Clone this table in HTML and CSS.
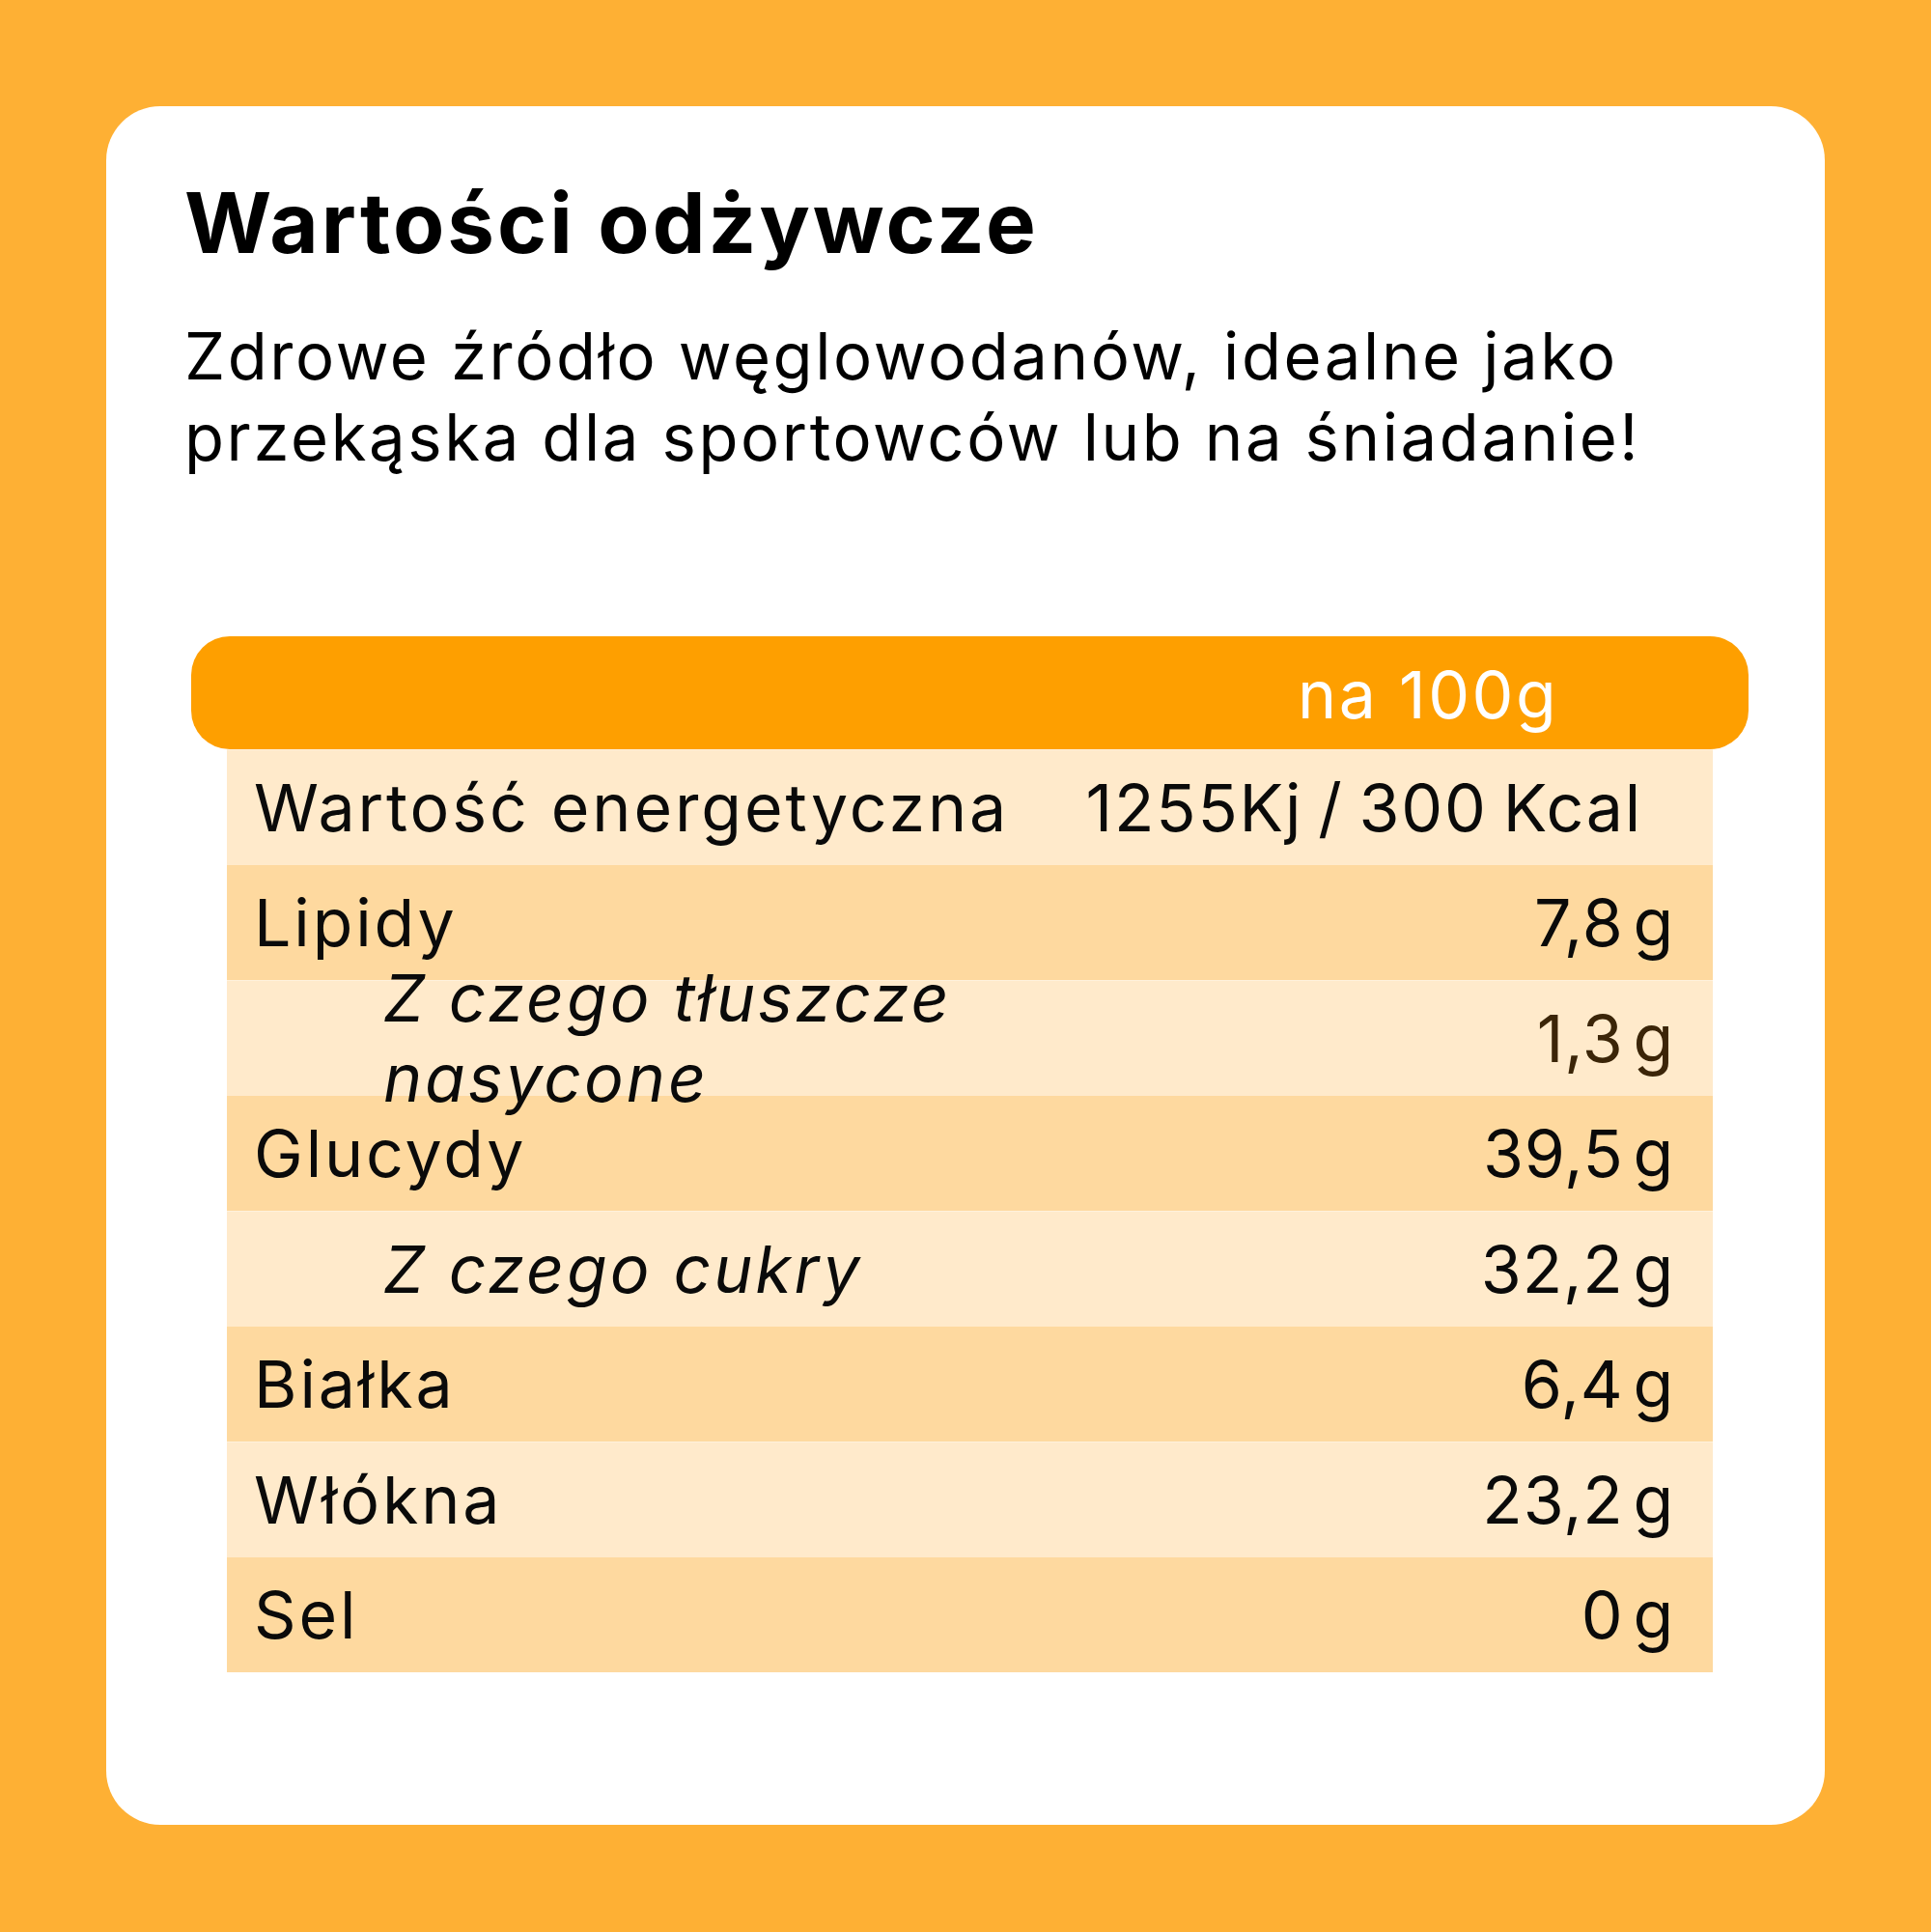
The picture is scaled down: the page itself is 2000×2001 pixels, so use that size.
FILE: index.html
```html
<!DOCTYPE html>
<html lang="pl">
<head>
<meta charset="utf-8">
<title>Wartości odżywcze</title>
<link rel="stylesheet" href="styles.css">
</head>
<body>
<div class="page">
  <div class="card">
    <h1 class="title">Wartości odżywcze</h1>
    <p class="lead">Zdrowe źródło węglowodanów, idealne jako<br>przekąska dla sportowców lub na śniadanie!</p>
    <div class="table">
      <div class="thead"><span class="thead-label">na 100g</span></div>
      <div class="rows">
        <div class="row row--light"><span class="label">Wartość energetyczna</span><span class="value value--energy">1255Kj / 300 Kcal</span></div>
        <div class="row row--dark"><span class="label">Lipidy</span><span class="value">7,8 g</span></div>
        <div class="row row--light"><span class="label label--sub">Z czego tłuszcze nasycone</span><span class="value value--brown">1,3 g</span></div>
        <div class="row row--dark"><span class="label">Glucydy</span><span class="value">39,5 g</span></div>
        <div class="row row--light"><span class="label label--sub">Z czego cukry</span><span class="value">32,2 g</span></div>
        <div class="row row--dark"><span class="label">Białka</span><span class="value">6,4 g</span></div>
        <div class="row row--light"><span class="label">Włókna</span><span class="value">23,2 g</span></div>
        <div class="row row--dark"><span class="label">Sel</span><span class="value">0 g</span></div>
      </div>
    </div>
  </div>
</div>
</body>
</html>
```

FILE: styles.css
```css
html, body {
  margin: 0;
  padding: 0;
}

body {
  width: 2000px;
  height: 2001px;
  background: #feb034;
  font-family: Inter, "Noto Sans", "Liberation Sans", sans-serif;
  color: #0a0a0a;
}

.page {
  padding: 110px 110px 111px 110px;
}

.card {
  height: 1780px;
  box-sizing: border-box;
  background: #ffffff;
  border-radius: 56px;
  padding-top: 71px;
}

.title {
  margin: 0 0 0 81px;
  font-size: 87px;
  line-height: 100px;
  font-weight: 700;
  letter-spacing: 3px;
  color: #000;
}

.lead {
  margin: 46px 0 0 81px;
  font-size: 67px;
  line-height: 84px;
  font-weight: 400;
  letter-spacing: 2.6px;
  color: #000;
}

.table {
  margin: 164px 79px 0 88px;
}

.thead {
  height: 117px;
  background: #fe9f00;
  border-radius: 40px;
  display: grid;
  grid-template-columns: 1146px 1fr;
  align-items: center;
}

.thead-label {
  grid-column: 2;
  color: #ffffff;
  font-size: 68px;
  line-height: 83px;
  padding-top: 4px;
  letter-spacing: 2.5px;
}

.rows {
  margin: 0 37px;
}

.row {
  height: 119.5px;
  box-sizing: border-box;
  display: flex;
  align-items: center;
  justify-content: space-between;
  padding: 0 40px 0 28px;
  font-size: 68px;
  line-height: 83px;
  letter-spacing: 2.9px;
}

.row--light {
  background: #ffeacb;
  border-top: 1px solid #fff1dc;
}

.row--dark {
  background: #fed99f;
}

.label {
  flex: 0 1 auto;
}

.label--sub {
  margin-left: 134px;
  max-width: 700px;
  font-style: italic;
}

.value {
  flex: 0 0 auto;
  white-space: nowrap;
  letter-spacing: 0.8px;
  word-spacing: -10px;
}

.value--energy {
  margin-right: 33px;
  letter-spacing: 1.8px;
  word-spacing: -5px;
}

.value--brown {
  color: #3b2508;
}
```
